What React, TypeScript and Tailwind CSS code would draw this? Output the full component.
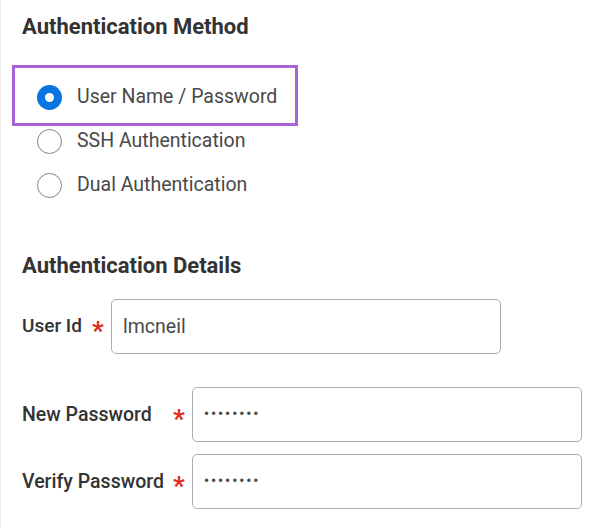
const FONT = { fontFamily: "Roboto, 'Liberation Sans', Arial, sans-serif" };

function Radio({ checked }: { checked?: boolean }) {
  if (checked) {
    return (
      <span className="flex h-[25px] w-[25px] shrink-0 items-center justify-center rounded-full bg-[#0875e1]">
        <span className="h-[9px] w-[9px] rounded-full bg-white" />
      </span>
    );
  }
  return <span className="h-[25px] w-[25px] shrink-0 rounded-full border-[1.5px] border-[#7b858f] bg-white" />;
}

function Star() {
  return <span className="text-[26px] font-bold leading-none text-[#de2e21]">*</span>;
}

function Field({ value, className }: { value: string; className: string }) {
  return (
    <div
      className={`flex h-[55px] items-center rounded-[5px] border-[1.5px] border-[#a9aeb5] bg-white pl-[11px] text-[#494949] ${className}`}
    >
      {value}
    </div>
  );
}

export default function App() {
  return (
    <div className="h-[527px] w-[600px] border-l border-[#ececec] bg-white pl-[11px]" style={FONT}>
      <h2 className="pl-[10px] pt-[13px] text-[22px] font-bold leading-[28px] text-[#333333]">
        Authentication Method
      </h2>

      <div className="mt-[24px] flex h-[61px] w-[286px] items-center gap-[15px] border-[3px] border-[#a864d6] pl-[22px] pt-[3px]">
        <Radio checked />
        <span className="text-[19.5px] text-[#494949]">User Name / Password</span>
      </div>
      <div className="flex h-[30px] items-center gap-[15px] pl-[25px]">
        <Radio />
        <span className="text-[19.5px] text-[#494949]">SSH Authentication</span>
      </div>
      <div className="mt-[14px] flex h-[30px] items-center gap-[15px] pl-[25px]">
        <Radio />
        <span className="text-[19.5px] text-[#494949]">Dual Authentication</span>
      </div>

      <h2 className="mt-[52px] pl-[10px] text-[22px] font-bold leading-[28px] text-[#333333]">
        Authentication Details
      </h2>

      <div className="mt-[19px] flex items-center pl-[10px]">
        <span className="w-[70px] text-[19px] font-medium text-[#333333]">User Id</span>
        <span className="flex w-[19px] pt-[8px]">
          <Star />
        </span>
        <Field value="lmcneil" className="w-[390px] text-[19.5px]" />
      </div>

      <div className="mt-[33px] flex flex-col gap-[12px] pl-[10px]">
        <div className="flex items-center">
          <span className="w-[151px] text-[19.5px] font-medium text-[#333333]">New Password</span>
          <span className="flex w-[19px] pt-[8px]">
            <Star />
          </span>
          <Field value="••••••••" className="w-[390px] text-[14px] font-bold tracking-[2px] text-[#333333]" />
        </div>
        <div className="flex items-center">
          <span className="w-[151px] text-[19.5px] font-medium text-[#333333]">Verify Password</span>
          <span className="flex w-[19px] pt-[8px]">
            <Star />
          </span>
          <Field value="••••••••" className="w-[390px] text-[14px] font-bold tracking-[2px] text-[#333333]" />
        </div>
      </div>
    </div>
  );
}
